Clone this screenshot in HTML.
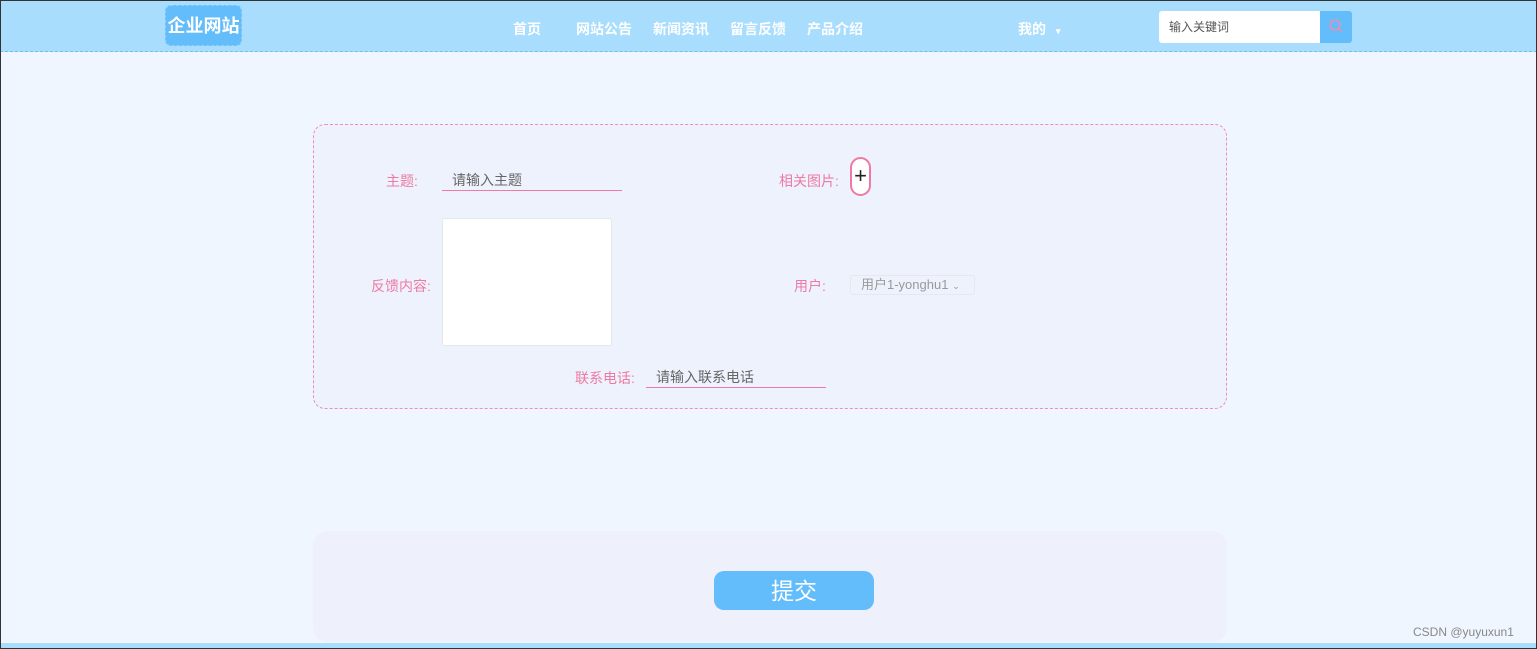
<!DOCTYPE html>
<html><head><meta charset="utf-8"><style>
*{margin:0;padding:0;box-sizing:border-box}
body{width:1537px;height:649px;overflow:hidden;background:#f0f6ff;font-family:"Liberation Sans","Noto Sans CJK SC",sans-serif;position:relative;}
.frame{position:absolute;left:0;top:0;width:1537px;height:649px;border:1px solid #333;pointer-events:none;z-index:9}
.hdr{position:absolute;left:0;top:0;width:1537px;height:52px;background:#a8ddfd;border-bottom:1px dashed #6fbfe8}
.logo{position:absolute;left:165px;top:5px;width:77px;height:41px;background:#64bdfb;border:1px dashed #8fd0fb;border-radius:6px;color:#fff;font-weight:bold;font-size:18px;line-height:41px;text-align:center}
.nav{position:absolute;top:19px;color:#fff;font-weight:bold;font-size:14px}
.search{position:absolute;left:1159px;top:11px;width:161px;height:32px;background:#fff;border-radius:3px 0 0 3px;font-size:12px;color:#555;line-height:32px;padding-left:10px}
.sbtn{position:absolute;left:1320px;top:11px;width:32px;height:32px;background:#64bdfb;border-radius:0 3px 3px 0}
.card{position:absolute;left:313px;top:124px;width:914px;height:285px;background:#eef2fd;border:1px dashed #f08db0;border-radius:12px}
.lbl{position:absolute;color:#ee7aa3;font-size:14px}
.inp{position:absolute;border-bottom:1px solid #ee7aa3;color:#666;font-size:14px;padding-left:10px;height:22px;line-height:22px}
.foot{position:absolute;left:313px;top:531px;width:914px;height:111px;background:#eef1fc;border-radius:14px}
</style></head><body>
<div class="frame"></div>
<div class="hdr">
<div class="logo">企业网站</div>
<div class="nav" style="left:513px">首页</div>
<div class="nav" style="left:576px">网站公告</div>
<div class="nav" style="left:653px">新闻资讯</div>
<div class="nav" style="left:730px">留言反馈</div>
<div class="nav" style="left:807px">产品介绍</div>
<div class="nav" style="left:1018px">我的 <span style="font-size:9px;margin-left:6px">▾</span></div>
<div class="search">输入关键词</div>
<div class="sbtn"><svg width="32" height="32"><circle cx="15" cy="14" r="5" fill="none" stroke="#e98fb0" stroke-width="1.5"/><line x1="18.5" y1="17.5" x2="22" y2="21" stroke="#e98fb0" stroke-width="1.5"/></svg></div>
</div>
<div class="card"></div>
<div class="lbl" style="left:386px;top:171px">主题:</div>
<div class="inp" style="left:442px;top:169px;width:180px">请输入主题</div>
<div class="lbl" style="left:779px;top:171px">相关图片:</div>
<div style="position:absolute;left:850px;top:157px;width:21px;height:39px;border:2px solid #ee7aa3;border-radius:11px;background:#fff;font-size:22px;line-height:34px;text-align:center;color:#222">+</div>
<div class="lbl" style="left:371px;top:276px">反馈内容:</div>
<div style="position:absolute;left:442px;top:218px;width:170px;height:128px;background:#fff;border:1px solid #e4e7ee;border-radius:3px"></div>
<div class="lbl" style="left:794px;top:276px">用户:</div>
<div style="position:absolute;left:850px;top:275px;width:125px;height:20px;border:1px solid #e6e8f0;border-radius:3px;font-size:13px;color:#999;line-height:18px;padding-left:10px">用户1-yonghu1 <span style="font-size:9px">⌄</span></div>
<div class="lbl" style="left:575px;top:368px">联系电话:</div>
<div class="inp" style="left:646px;top:366px;width:180px">请输入联系电话</div>
<div class="foot"></div>
<div style="position:absolute;left:714px;top:571px;width:160px;height:39px;background:#64bdfb;border-radius:10px;color:#fff;font-size:23px;line-height:41px;text-align:center">提交</div>
<div style="position:absolute;left:1413px;top:625px;font-size:12px;color:#888">CSDN @yuyuxun1</div>
<div style="position:absolute;left:0;top:643px;width:1537px;height:6px;background:#a8ddfd"></div>
</body></html>
